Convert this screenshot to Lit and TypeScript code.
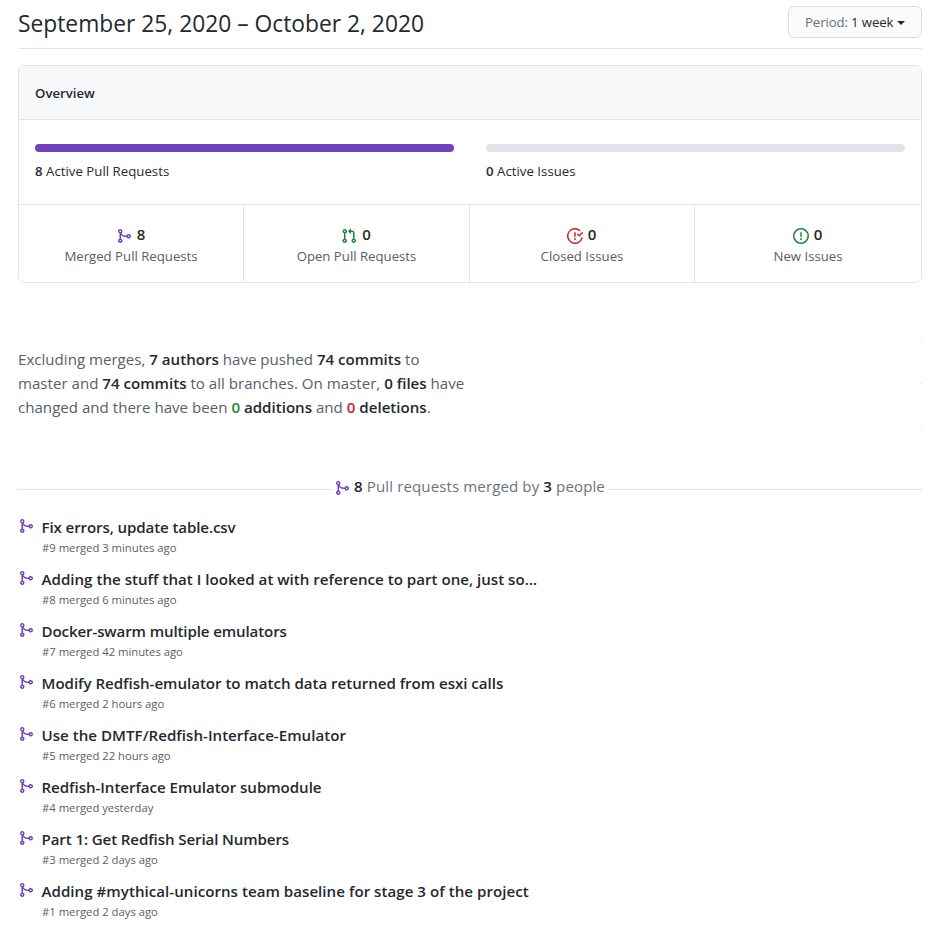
import { LitElement, html, css, svg } from "lit";
import { customElement, property } from "lit/decorators.js";
import { styleMap } from "lit/directives/style-map.js";

const ICONS: Record<string, string> = {
  merge:
    "M5 3.254V3.25v.005a.75.75 0 110-.005v.004zm.45 1.9a2.25 2.25 0 10-1.95.218v5.256a2.25 2.25 0 101.5 0V7.123A5.735 5.735 0 009.25 9h1.378a2.251 2.251 0 100-1.5H9.25a4.25 4.25 0 01-3.8-2.346zM12.75 9a.75.75 0 100-1.5.75.75 0 000 1.5zm-8.5 4.5a.75.75 0 100-1.5.75.75 0 000 1.5z",
  pull:
    "M7.177 3.073L9.573.677A.25.25 0 0110 .854v4.792a.25.25 0 01-.427.177L7.177 3.427a.25.25 0 010-.354zM3.75 2.5a.75.75 0 100 1.5.75.75 0 000-1.5zm-2.25.75a2.25 2.25 0 113 2.122v5.256a2.251 2.251 0 11-1.5 0V5.372A2.25 2.25 0 011.5 3.25zM11 2.5h-1V4h1a1 1 0 011 1v5.628a2.251 2.251 0 101.5 0V5A2.5 2.5 0 0011 2.5zm1 10.25a.75.75 0 111.5 0 .75.75 0 01-1.5 0zM3.75 12a.75.75 0 100 1.5.75.75 0 000-1.5z",
  closed:
    "M1.5 8a6.5 6.5 0 0110.65-5.003.75.75 0 00.959-1.153 8 8 0 102.592 8.33.75.75 0 10-1.444-.407A6.5 6.5 0 011.5 8zM8 12a1 1 0 100-2 1 1 0 000 2zm0-8a.75.75 0 01.75.75v3.5a.75.75 0 11-1.5 0v-3.5A.75.75 0 018 4zm4.78 4.28l3-3a.75.75 0 00-1.06-1.06l-2.47 2.47-.97-.97a.749.749 0 10-1.06 1.06l1.5 1.5a.75.75 0 001.06 0z",
  opened:
    "M8 1.5a6.5 6.5 0 100 13 6.5 6.5 0 000-13zM0 8a8 8 0 1116 0A8 8 0 010 8zm9 3a1 1 0 11-2 0 1 1 0 012 0zm-.25-6.25a.75.75 0 00-1.5 0v3.5a.75.75 0 001.5 0v-3.5z",
};

@customElement("oct-icon")
export class OctIcon extends LitElement {
  @property() name = "merge";
  static styles = css`
    :host { display: block; width: 16px; height: 16px; flex: none; }
    svg { display: block; fill: currentColor; }
  `;
  render() {
    return html`<svg width="16" height="16" viewBox="0 0 16 16" aria-hidden="true">
      ${svg`<path fill-rule="evenodd" d=${ICONS[this.name]}></path>`}
    </svg>`;
  }
}

const STATS = [
  { icon: "merge", tone: "purple", count: 8, label: "Merged Pull Requests" },
  { icon: "pull", tone: "green", count: 0, label: "Open Pull Requests" },
  { icon: "closed", tone: "red", count: 0, label: "Closed Issues" },
  { icon: "opened", tone: "green", count: 0, label: "New Issues" },
];

// tracking: letter spacing of the title, in px
const MERGED = [
  { name: "Fix errors, update table.csv", meta: "#9 merged 3 minutes ago", tracking: -0.11 },
  { name: "Adding the stuff that I looked at with reference to part one, just so…", meta: "#8 merged 6 minutes ago", tracking: 0.01 },
  { name: "Docker-swarm multiple emulators", meta: "#7 merged 42 minutes ago", tracking: -0.12 },
  { name: "Modify Redfish-emulator to match data returned from esxi calls", meta: "#6 merged 2 hours ago", tracking: -0.03 },
  { name: "Use the DMTF/Redfish-Interface-Emulator", meta: "#5 merged 22 hours ago", tracking: 0.02 },
  { name: "Redfish-Interface Emulator submodule", meta: "#4 merged yesterday", tracking: -0.05 },
  { name: "Part 1: Get Redfish Serial Numbers", meta: "#3 merged 2 days ago", tracking: -0.11 },
  { name: "Adding #mythical-unicorns team baseline for stage 3 of the project", meta: "#1 merged 2 days ago", tracking: 0.03 },
];

@customElement("app-root")
export class AppRoot extends LitElement {
  static styles = css`
    :host {
      display: block;
      box-sizing: border-box;
      height: 931px;
      overflow: hidden;
      padding: 0 18px;
      background: #fff;
      color: #24292e;
      font: 13.2px/21px "Open Sans", "Noto Sans", sans-serif;
    }
    * { box-sizing: border-box; }
    b { font-weight: 600; color: #24292e; }
    b.green { color: #22863a; }
    b.red { color: #cb2431; }
    h1, h2, h3, p, ul { margin: 0; padding: 0; font-weight: 400; }
    .purple { color: #6f42c1; }
    .green { color: #22863a; }
    .red { color: #cb2431; }

    .top {
      display: flex;
      justify-content: space-between;
      height: 49px;
      border-bottom: 1px solid #e1e4e8;
    }
    .top h1 { font-size: 22.8px; line-height: 36px; padding-top: 6px; white-space: nowrap; }
    .period {
      display: flex;
      align-items: center;
      width: 134px;
      height: 32px;
      margin-top: 6px;
      padding: 0 16px;
      border: 1px solid #d9dce0;
      border-radius: 6px;
      background: #fafbfc;
      color: #24292e;
      font: 500 13.2px/20px "Open Sans", "Noto Sans", sans-serif;
      letter-spacing: -0.08px;
      white-space: nowrap;
    }
    .period i { font-style: normal; font-weight: 400; color: #6a6f74; margin-right: 3px; }
    .caret { margin: 1px 0 0 4px; border: 4px solid transparent; border-top-color: #24292e; border-bottom: 0; }

    .box { margin-top: 16px; height: 218px; border: 1px solid #e1e4e8; border-radius: 6px; overflow: hidden; }
    .box h3 {
      height: 54px;
      padding: 0 16px;
      border-bottom: 1px solid #e1e4e8;
      background: #f6f8fa;
      font-size: 13.2px;
      font-weight: 600;
      line-height: 54px;
    }
    .bars { display: grid; grid-template-columns: 1fr 1fr; gap: 32px; height: 84px; padding: 24px 16px 0; letter-spacing: 0.03px; }
    .bar { height: 8px; border-radius: 4px; background: #e1e4e8; margin-bottom: 9px; }
    .bar.full { background: #6f42c1; }
    .stats { display: grid; grid-template-columns: 225px 226px 225px 1fr; height: 79px; border-top: 1px solid #e1e4e8; }
    .stat { padding-top: 19px; text-align: center; color: #586069; border-right: 1px solid #e1e4e8; }
    .stat:last-child { border-right: 0; }
    .count { display: flex; justify-content: center; gap: 5px; height: 22px; padding-right: 1px; font-size: 15px; }
    .count oct-icon { margin-top: 4px; }

    .activity { display: flex; justify-content: space-between; height: 94px; margin-top: 55px; }
    .summary { width: 460px; padding-top: 9px; font-size: 15.1px; line-height: 24px; color: #586069; white-space: nowrap; }
    .ticks { display: flex; flex-direction: column; gap: 44px; width: 2px; }
    .tick { height: 1px; background: #ececec; }

    .divider { display: flex; align-items: center; height: 24px; margin-top: 42px; }
    .divider::before, .divider::after { content: ""; flex: 1; height: 1px; margin-top: 6px; background: #e1e4e8; }
    .divider h2 { display: flex; gap: 4px; padding: 0 4px 0 3px; font-size: 15.1px; line-height: 24px; letter-spacing: 0.09px; color: #6a737d; white-space: nowrap; }
    .divider oct-icon { margin-top: 6px; }

    .list { list-style: none; margin-top: 17px; }
    .item { display: flex; gap: 8px; height: 52px; white-space: nowrap; }
    .item oct-icon { margin-top: 3px; }
    .name { font-size: 15.1px; font-weight: 600; line-height: 24px; margin-left: -0.5px; }
    .meta { font-size: 11.3px; line-height: 18px; letter-spacing: -0.02px; color: #586069; }
  `;

  render() {
    return html`
      <header class="top">
        <h1>September 25, 2020 – October 2, 2020</h1>
        <button class="period"><i>Period:</i><span>1 week</span><span class="caret"></span></button>
      </header>

      <section class="box">
        <h3>Overview</h3>
        <div class="bars">
          <div><div class="bar full"></div><b>8</b> Active Pull Requests</div>
          <div><div class="bar"></div><b>0</b> Active Issues</div>
        </div>
        <div class="stats">
          ${STATS.map(
            (s) => html`<div class="stat">
              <div class="count"><oct-icon class=${s.tone} name=${s.icon}></oct-icon><b>${s.count}</b></div>
              ${s.label}
            </div>`
          )}
        </div>
      </section>

      <section class="activity">
        <p class="summary">
          Excluding merges, <b>7 authors</b> have pushed <b>74 commits</b> to<br />
          master and <b>74 commits</b> to all branches. On master, <b>0 files</b> have<br />
          changed and there have been <b class="green">0</b> <b>additions</b> and <b class="red">0</b> <b>deletions</b>.
        </p>
        <div class="ticks"><div class="tick"></div><div class="tick"></div><div class="tick"></div></div>
      </section>

      <div class="divider">
        <h2><oct-icon class="purple" name="merge"></oct-icon><span><b>8</b> Pull requests merged by <b>3</b> people</span></h2>
      </div>

      <ul class="list">
        ${MERGED.map(
          (pr) => html`<li class="item">
            <oct-icon class="purple" name="merge"></oct-icon>
            <div>
              <div class="name" style=${styleMap({ letterSpacing: `${pr.tracking}px` })}>${pr.name}</div>
              <div class="meta">${pr.meta}</div>
            </div>
          </li>`
        )}
      </ul>
    `;
  }
}
